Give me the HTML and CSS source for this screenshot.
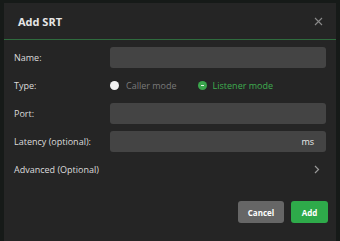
FILE: index.html
```html
<!DOCTYPE html>
<html>
<head>
<meta charset="utf-8">
<link rel="stylesheet" href="styles.css">
</head>
<body>
<div class="modal">
  <div class="header">
    <span class="title">Add SRT</span>
    <svg class="close" width="9" height="9" viewBox="0 0 9 9"><path d="M1 1L8 8M8 1L1 8" stroke="#8a8a8a" stroke-width="1.1"/></svg>
  </div>
  <div class="body">
    <div class="row">
      <label class="label">Name:</label>
      <div class="input"></div>
    </div>
    <div class="row type">
      <label class="label">Type:</label>
      <div class="radios">
        <span class="radio"><span class="dot off"></span><span class="rtext off">Caller mode</span></span>
        <span class="radio"><span class="dot on"></span><span class="rtext on">Listener mode</span></span>
      </div>
    </div>
    <div class="row">
      <label class="label">Port:</label>
      <div class="input"></div>
    </div>
    <div class="row">
      <label class="label">Latency (optional):</label>
      <div class="input unit"><span>ms</span></div>
    </div>
    <div class="advanced">
      <span>Advanced (Optional)</span>
      <svg width="6" height="9" viewBox="0 0 6 9"><path d="M1 1L4.5 4.5L1 8" stroke="#9a9a9a" stroke-width="1.2" fill="none"/></svg>
    </div>
    <div class="footer">
      <button class="btn cancel">Cancel</button>
      <button class="btn add">Add</button>
    </div>
  </div>
</div>
</body>
</html>
```
FILE: styles.css
```css
html, body {
  margin: 0;
  padding: 0;
}
body {
  width: 340px;
  height: 241px;
  overflow: hidden;
  background: #161a18;
  padding: 3px 4px 0 4px;
  box-sizing: border-box;
  font-family: "Open Sans", "Noto Sans", sans-serif;
}
.modal {
  width: 332px;
  height: 250px;
  background: #252525;
}
.header {
  height: 36px;
  border-bottom: 1px solid #2f6b3e;
  display: flex;
  align-items: center;
  justify-content: space-between;
  padding: 0 13px 0 14px;
}
.title {
  color: #e6e6e6;
  font-weight: 700;
  font-size: 11px;
}
.close {
  display: block;
}
.body {
  padding: 7px 10px 0 10px;
}
.row {
  display: flex;
  align-items: center;
  height: 21px;
  margin-bottom: 7px;
}
.label {
  width: 96px;
  color: #dcdcdc;
  font-size: 9px;
}
.input {
  width: 216px;
  height: 21px;
  background: #444444;
  border-radius: 3px;
}
.input.unit {
  display: flex;
  align-items: center;
  justify-content: flex-end;
  padding-right: 12px;
  box-sizing: border-box;
  color: #ececec;
  font-size: 9px;
}
.radios {
  display: flex;
  align-items: center;
  gap: 21px;
}
.radio {
  display: flex;
  align-items: center;
  gap: 7px;
  font-size: 9px;
}
.dot {
  width: 9px;
  height: 9px;
  border-radius: 50%;
  box-sizing: border-box;
}
.dot.off {
  background: #f2f2f2;
}
.dot.on {
  background: #3aa64c;
  position: relative;
}
.dot.on::after {
  content: "";
  position: absolute;
  left: 3px;
  top: 4px;
  width: 3px;
  height: 1px;
  background: #e8f6ea;
}
.radio:last-child {
  gap: 6px;
}
.rtext.off { color: #7a7a7a; }
.rtext.on { color: #3fae50; }
.advanced {
  display: flex;
  align-items: center;
  justify-content: space-between;
  color: #dcdcdc;
  font-size: 9px;
  height: 20px;
  padding-right: 6px;
  margin-top: 7px;
}
.footer {
  display: flex;
  justify-content: flex-end;
  gap: 7px;
  margin-top: 22px;
  margin-right: -2px;
}
.btn {
  border: none;
  height: 22px;
  border-radius: 3px;
  color: #fff;
  font-family: "Open Sans", "Noto Sans", sans-serif;
  font-weight: 700;
  font-size: 8px;
  padding: 0;
}
.cancel {
  width: 46px;
  background: #666666;
}
.add {
  width: 37px;
  background: #2eaa4a;
}
```
